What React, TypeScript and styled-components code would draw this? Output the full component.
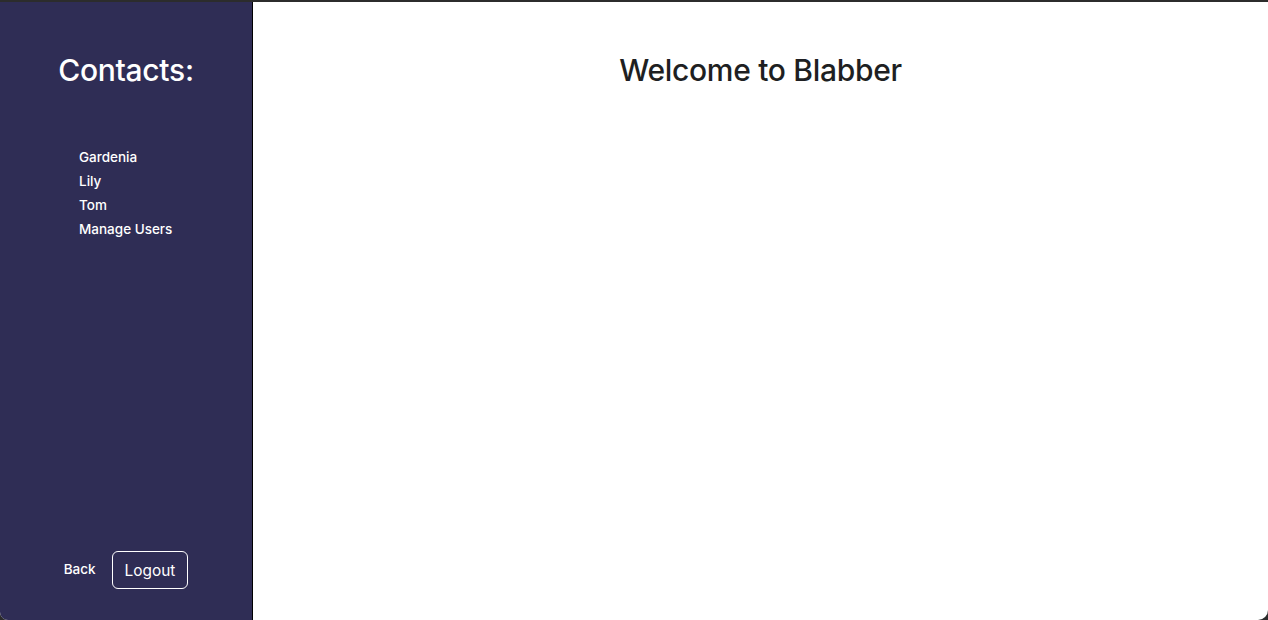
import styled, { createGlobalStyle } from 'styled-components'

const GlobalStyle = createGlobalStyle`
  html, body {
    margin: 0;
    padding: 0;
    background: #2c2c2c;
  }
  body {
    font-family: Inter, "Noto Sans", "Liberation Sans", sans-serif;
  }
`

const Window = styled.div`
  display: flex;
  height: 618px;
  margin-top: 2px;
  border-radius: 0 0 10px 8px;
  overflow: hidden;
  background: #ffffff;
`

const Sidebar = styled.aside`
  display: flex;
  flex-direction: column;
  width: 252px;
  flex-shrink: 0;
  background: #2f2d55;
  border-right: 1px solid #000000;
  color: #ffffff;
`

const SidebarTitle = styled.h2`
  margin: 48px 0 0;
  font-size: 30px;
  font-weight: 500;
  line-height: 40px;
  text-align: center;
  letter-spacing: -0.3px;
`

const ContactList = styled.ul`
  list-style: none;
  margin: 55px 0 0;
  padding: 0 0 0 79px;
  flex: 1;
`

const ContactItem = styled.li`
  font-size: 13.5px;
  font-weight: 500;
  line-height: 24px;
  cursor: pointer;
`

const Footer = styled.div`
  display: flex;
  align-items: center;
  justify-content: center;
  gap: 16px;
  padding: 0 0 31px;
`

const BackLink = styled.span`
  font-size: 13.5px;
  font-weight: 500;
  margin-top: -2px;
  cursor: pointer;
`

const LogoutButton = styled.button`
  height: 38px;
  padding: 0 12px;
  border: 1px solid #ffffff;
  border-radius: 6px;
  background: transparent;
  color: #ffffff;
  font-family: inherit;
  font-size: 15.4px;
  cursor: pointer;
`

const Main = styled.main`
  flex: 1;
  display: flex;
  justify-content: center;
`

const Heading = styled.h1`
  margin: 48px 0 0;
  font-size: 30px;
  font-weight: 500;
  line-height: 40px;
  color: #1e1f22;
  letter-spacing: -0.3px;
`

const contacts = ['Gardenia', 'Lily', 'Tom', 'Manage Users']

const App = () => {
  return (
    <>
      <GlobalStyle />
      <Window>
        <Sidebar>
          <SidebarTitle>Contacts:</SidebarTitle>
          <ContactList>
            {contacts.map((name) => (
              <ContactItem key={name}>{name}</ContactItem>
            ))}
          </ContactList>
          <Footer>
            <BackLink>Back</BackLink>
            <LogoutButton>Logout</LogoutButton>
          </Footer>
        </Sidebar>
        <Main>
          <Heading>Welcome to Blabber</Heading>
        </Main>
      </Window>
    </>
  )
}

export default App
